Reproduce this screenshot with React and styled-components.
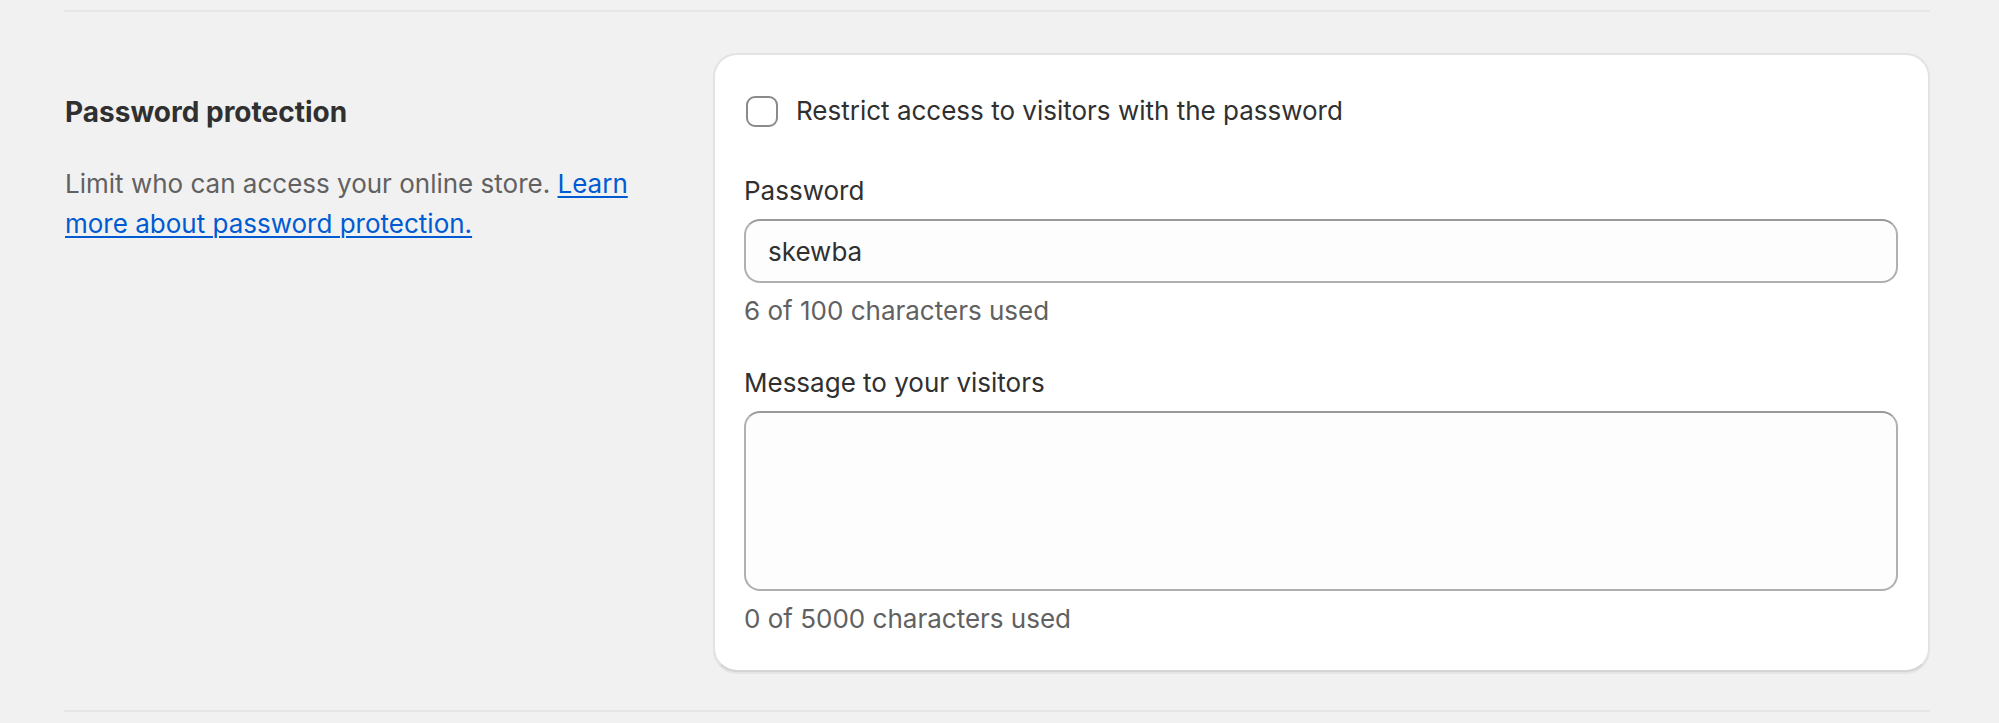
import React from "react";
import styled, { createGlobalStyle } from "styled-components";

const GlobalStyle = createGlobalStyle`
  html, body {
    margin: 0;
    padding: 0;
    background: #f1f1f1;
  }
  body {
    font-family: Inter, "Noto Sans", "Liberation Sans", sans-serif;
    color: #303030;
    -webkit-font-smoothing: antialiased;
  }
`;

export default function App() {
  return (
    <>
      <GlobalStyle />
      <Page>
        <Divider />
        <Section>
          <Annotation>
            <SectionTitle>Password protection</SectionTitle>
            <SectionText>
              Limit who can access your online store.{" "}
              <InlineLink href="#">Learn more about password protection.</InlineLink>
            </SectionText>
          </Annotation>
          <Card>
            <CheckboxRow>
              <Checkbox type="checkbox" />
              <span>Restrict access to visitors with the password</span>
            </CheckboxRow>
            <Field>
              <Label>Password</Label>
              <TextInput defaultValue="skewba" />
              <HelpText>6 of 100 characters used</HelpText>
            </Field>
            <Field $gap={32}>
              <Label>Message to your visitors</Label>
              <TextArea />
              <HelpText>0 of 5000 characters used</HelpText>
            </Field>
          </Card>
        </Section>
        <Divider />
      </Page>
    </>
  );
}

const Page = styled.div`
  width: 1866px;
  margin-left: 64px;
  padding-top: 10px;
`;

const Divider = styled.hr`
  margin: 0;
  border: 0;
  height: 2px;
  background: #e6e6e6;
`;

const Section = styled.div`
  display: grid;
  grid-template-columns: 609px 1fr;
  gap: 40px;
  align-items: start;
  padding: 41px 0 38px;
`;

const Annotation = styled.div`
  display: flex;
  flex-direction: column;
  gap: 32px;
  padding-top: 39px;
  padding-left: 1px;
`;

const SectionTitle = styled.h2`
  margin: 0;
  font-size: 28px;
  line-height: 40px;
  font-weight: 650;
  color: #303030;
`;

const SectionText = styled.p`
  margin: 0;
  font-size: 26px;
  line-height: 40px;
  color: #616161;
`;

const InlineLink = styled.a`
  color: #005bd3;
  text-decoration: underline;
  text-underline-offset: 3px;
  text-decoration-thickness: 2px;
`;

const Card = styled.div`
  background: #ffffff;
  border-radius: 24px;
  border: 2px solid #e3e3e3;
  border-bottom-color: #d4d4d4;
  box-shadow: 0 2px 0 rgba(26, 26, 26, 0.05);
  padding: 36px 30px 31px 29px;
  display: flex;
  flex-direction: column;
`;

const CheckboxRow = styled.label`
  display: flex;
  align-items: center;
  gap: 18px;
  font-size: 26px;
  line-height: 40px;
  color: #303030;
  padding-left: 2px;
`;

const Checkbox = styled.input`
  appearance: none;
  margin: 0;
  width: 32px;
  height: 31px;
  border: 2px solid #8a8a8a;
  border-radius: 9px;
  background: #ffffff;
  flex-shrink: 0;
`;

const Field = styled.div`
  display: flex;
  flex-direction: column;
  margin-top: ${(p) => p.$gap || 40}px;
`;

const Label = styled.div`
  font-size: 26px;
  line-height: 40px;
  color: #303030;
  margin-bottom: 8px;
`;

const inputBase = `
  box-sizing: border-box;
  width: 100%;
  background: #fdfdfd;
  border: 2px solid #b0b0b0;
  border-top-color: #9a9a9a;
  border-radius: 16px;
  font-family: Inter, "Noto Sans", "Liberation Sans", sans-serif;
  font-size: 26px;
  color: #303030;
  outline: none;
  margin: 0;
`;

const TextInput = styled.input`
  ${inputBase}
  height: 64px;
  padding: 0 22px;
`;

const TextArea = styled.textarea`
  ${inputBase}
  height: 180px;
  padding: 12px 22px;
  resize: none;
  display: block;
`;

const HelpText = styled.div`
  margin-top: 8px;
  font-size: 26px;
  line-height: 40px;
  color: #616161;
`;
